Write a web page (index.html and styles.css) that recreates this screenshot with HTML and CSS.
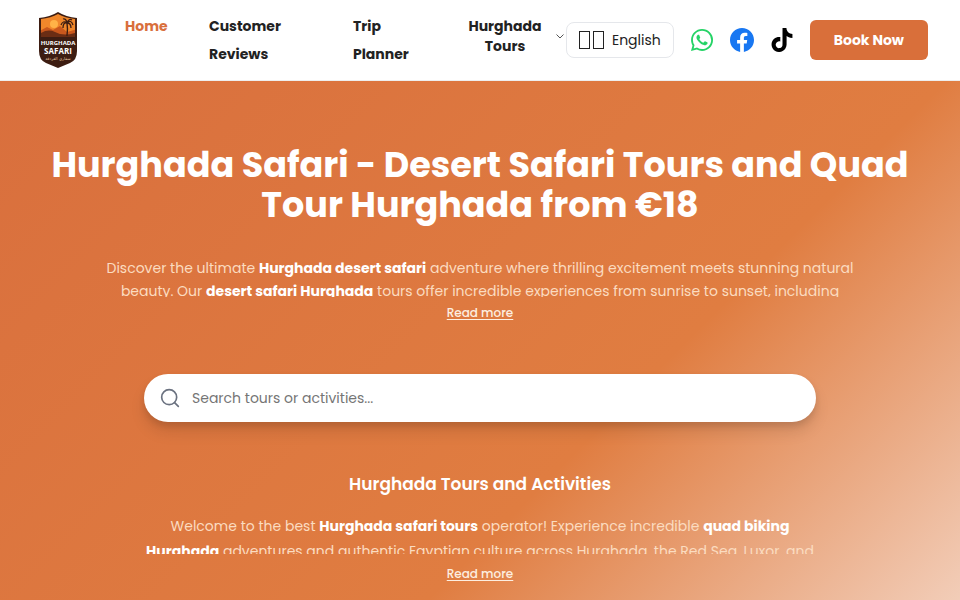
FILE: index.html
```html
<!DOCTYPE html>
<html lang="en">
<head>
<meta charset="utf-8">
<meta name="viewport" content="width=device-width, initial-scale=1">
<title>Hurghada Safari</title>
<link rel="stylesheet" href="styles.css">
</head>
<body>

<header class="header">
  <a class="logo" href="#" aria-label="Hurghada Safari">
    <svg width="40" height="56" viewBox="0 0 40 56">
      <defs>
        <clipPath id="shield"><path d="M20 2 Q27 6 37 7 V39 Q37 46 31 49 L20 54 L9 49 Q3 46 3 39 V7 Q13 6 20 2Z"/></clipPath>
      </defs>
      <path d="M20 0 Q28 5 39 6 V39 Q39 48 32 51 L20 56 L8 51 Q1 48 1 39 V6 Q12 5 20 0Z" fill="#3d1d12"/>
      <g clip-path="url(#shield)">
        <path d="M0 0H40V26H0Z" fill="#f0872b"/>
        <circle cx="16" cy="12" r="4" fill="#ffb347"/>
        <path d="M0 20 L9 15 L15 18 L22 14 L29 20 L40 17 V30H0Z" fill="#c9581d"/>
        <path d="M0 23 Q9 16 17 20 Q26 25 40 20 V30H0Z" fill="#6b2d14"/>
        <path d="M0 25H40V56H0Z" fill="#3d1d12"/>
      </g>
      <path d="M29 24 Q30 17 29 11" fill="none" stroke="#3d1d12" stroke-width="1.4"/>
      <path d="M29 11 Q25 8 23 13 M29 11 Q25 10 25 16 M29 11 Q33 7 35 13 M29 11 Q33 11 33 16 M29 11 Q28 6 25 7 M29 11 Q31 6 34 8" fill="none" stroke="#3d1d12" stroke-width="1.3"/>
      <text class="logo-text" x="20" y="33" font-size="6">HURGHADA</text>
      <text class="logo-text" x="20" y="42" font-size="8">SAFARI</text>
      <text class="logo-arabic" x="20" y="48" font-size="4">سفاري الغردقة</text>
    </svg>
  </a>

  <nav class="nav">
    <a class="nav-link active" href="#">Home</a>
    <a class="nav-link nav-reviews" href="#">Customer Reviews</a>
    <a class="nav-link nav-planner" href="#">Trip Planner</a>
    <button class="nav-drop" type="button">
      <span>Hurghada Tours</span>
      <svg width="8" height="8" viewBox="0 0 8 8" fill="none" stroke="#555" stroke-width="1"><path d="M0.5 2.5L4 6l3.5-3.5"/></svg>
    </button>
  </nav>

  <div class="actions">
    <button class="lang" type="button"><span class="flag"><i></i><i></i></span> <span>English</span></button>
    <a class="social" href="#" aria-label="WhatsApp">
      <svg width="24" height="24" viewBox="-1 -1 26 26" fill="#25d366"><path d="M17.472 14.382c-.297-.149-1.758-.867-2.03-.967-.273-.099-.471-.148-.67.15-.197.297-.767.966-.94 1.164-.173.199-.347.223-.644.075-.297-.15-1.255-.463-2.39-1.475-.883-.788-1.48-1.761-1.653-2.059-.173-.297-.018-.458.13-.606.134-.133.298-.347.446-.52.149-.174.198-.298.298-.497.099-.198.05-.371-.025-.52-.075-.149-.669-1.612-.916-2.207-.242-.579-.487-.5-.669-.51-.173-.008-.371-.01-.57-.01-.198 0-.52.074-.792.372-.272.297-1.04 1.016-1.04 2.479 0 1.462 1.065 2.875 1.213 3.074.149.198 2.096 3.2 5.077 4.487.709.306 1.262.489 1.694.625.712.227 1.36.195 1.871.118.571-.085 1.758-.719 2.006-1.413.248-.694.248-1.289.173-1.413-.074-.124-.272-.198-.57-.347m-5.421 7.403h-.004a9.87 9.87 0 01-5.031-1.378l-.361-.214-3.741.982.998-3.648-.235-.374a9.86 9.86 0 01-1.51-5.26c.001-5.45 4.436-9.884 9.888-9.884 2.64 0 5.122 1.03 6.988 2.898a9.825 9.825 0 012.893 6.994c-.003 5.45-4.437 9.884-9.885 9.884m8.413-18.297A11.815 11.815 0 0012.05 0C5.495 0 .16 5.335.157 11.892c0 2.096.547 4.142 1.588 5.945L.057 24l6.305-1.654a11.882 11.882 0 005.683 1.448h.005c6.554 0 11.89-5.335 11.893-11.893a11.821 11.821 0 00-3.48-8.413z"/></svg>
    </a>
    <a class="social" href="#" aria-label="Facebook">
      <svg width="24" height="24" viewBox="0 0 24 24" fill="#1877f2"><path d="M24 12.073c0-6.627-5.373-12-12-12s-12 5.373-12 12c0 5.99 4.388 10.954 10.125 11.854v-8.385H7.078v-3.47h3.047V9.43c0-3.007 1.792-4.669 4.533-4.669 1.312 0 2.686.235 2.686.235v2.953H15.83c-1.491 0-1.956.925-1.956 1.874v2.25h3.328l-.532 3.47h-2.796v8.385C19.612 23.027 24 18.062 24 12.073z"/></svg>
    </a>
    <a class="social" href="#" aria-label="TikTok">
      <svg width="24" height="24" viewBox="0 0 24 24" fill="#000"><path d="M12.525.02c1.31-.02 2.61-.01 3.91-.02.08 1.53.63 3.09 1.75 4.17 1.12 1.11 2.7 1.62 4.24 1.79v4.03c-1.44-.05-2.89-.35-4.2-.97-.57-.26-1.1-.59-1.62-.93-.01 2.92.01 5.84-.02 8.75-.08 1.4-.54 2.79-1.35 3.94-1.31 1.92-3.58 3.17-5.91 3.21-1.43.08-2.86-.31-4.08-1.03-2.02-1.19-3.44-3.37-3.65-5.71-.02-.5-.03-1-.01-1.49.18-1.9 1.12-3.72 2.58-4.96 1.66-1.44 3.98-2.13 6.15-1.72.02 1.48-.04 2.96-.04 4.44-.99-.32-2.15-.23-3.02.37-.63.41-1.11 1.04-1.36 1.75-.21.51-.15 1.07-.14 1.61.24 1.64 1.82 3.02 3.5 2.87 1.12-.01 2.19-.66 2.77-1.61.19-.33.4-.67.41-1.06.1-1.79.06-3.57.07-5.36.01-4.03-.01-8.05.02-12.07z"/></svg>
    </a>
    <button class="book" type="button">Book Now</button>
  </div>
</header>

<main class="hero">
  <h1>Hurghada Safari - Desert Safari Tours and Quad Tour Hurghada from €18</h1>

  <section class="intro">
    <p class="clamp">Discover the ultimate <strong>Hurghada desert safari</strong> adventure where thrilling excitement meets stunning natural beauty. Our <strong>desert safari Hurghada</strong> tours offer incredible experiences from sunrise to sunset, including</p>
    <button class="more" type="button">Read more</button>
  </section>

  <form class="search">
    <svg width="20" height="20" viewBox="0 0 24 24" fill="none" stroke="#6b7280" stroke-width="2" stroke-linecap="round"><circle cx="11" cy="11" r="9"/><path d="M22 22l-4.5-4.5"/></svg>
    <input type="text" aria-label="Search tours or activities" placeholder="Search tours or activities...">
  </form>

  <section class="about">
    <h2>Hurghada Tours and Activities</h2>
    <p class="clamp">Welcome to the best <strong>Hurghada safari tours</strong> operator! Experience incredible <strong>quad biking Hurghada</strong> adventures and authentic Egyptian culture across Hurghada, the Red Sea, Luxor, and</p>
    <button class="more" type="button">Read more</button>
  </section>
</main>

</body>
</html>
```
FILE: styles.css
```css
* {
  box-sizing: border-box;
}

body {
  margin: 0;
  min-height: 100vh;
  display: flex;
  flex-direction: column;
  font-family: Poppins, Inter, "Liberation Sans", sans-serif;
  color: #222;
}

a {
  color: inherit;
  text-decoration: none;
}

button {
  font: inherit;
  color: inherit;
  border: 0;
  background: none;
  padding: 0;
  cursor: pointer;
}

/* header */
.header {
  display: flex;
  align-items: center;
  min-height: 81px;
  padding: 0 32px 0 38px;
  background: #fff;
  border-bottom: 1px solid #eee;
}

.logo {
  display: flex;
  margin-right: 47px;
}

.logo-text {
  fill: #fff;
  font-family: "Open Sans", sans-serif;
  font-weight: 700;
  text-anchor: middle;
}

.logo-arabic {
  fill: #e9c9a0;
  font-family: "DejaVu Sans", sans-serif;
  text-anchor: middle;
}

.nav {
  flex: 1;
  display: flex;
  align-items: flex-start;
  gap: 40px;
  font-size: 14px;
  font-weight: 700;
  line-height: 28px;
}

.nav-link {
  min-width: 44px;
}

.active {
  color: #d96f3c;
}

.nav-reviews {
  width: 104px;
}

.nav-planner {
  width: 74px;
}

.nav-drop {
  flex: 1;
  display: flex;
  align-items: center;
  justify-content: space-between;
  padding: 4px 2px 4px 0;
  line-height: 20px;
}

.nav-drop span {
  width: 76px;
}

.actions {
  display: flex;
  align-items: center;
  gap: 16px;
}

.lang {
  display: flex;
  align-items: center;
  gap: 8px;
  height: 36px;
  padding: 0 12px;
  border: 1px solid #e5e7eb;
  border-radius: 8px;
  font-size: 14px;
}

.flag {
  display: flex;
  gap: 3px;
}

.flag i {
  width: 11px;
  height: 18px;
  border: 1px solid #222;
}

.social {
  display: flex;
}

.book {
  height: 40px;
  padding: 0 24px;
  border-radius: 6px;
  background: #d96f3a;
  color: #fff;
  font-size: 14px;
  font-weight: 700;
}

/* hero */
.hero {
  flex: 1;
  display: flex;
  flex-direction: column;
  align-items: center;
  padding: 64px 48px 16px;
  background: linear-gradient(135deg, #d96f3d 0%, #e07d41 64%, #f2cdb8 100%);
  color: #fff;
  text-align: center;
}

h1 {
  margin: 0 0 32px;
  font-size: 35px;
  line-height: 40px;
}

.intro,
.about {
  display: flex;
  flex-direction: column;
  align-items: center;
  font-size: 14px;
}

.intro {
  max-width: 768px;
  line-height: 23px;
}

.about {
  max-width: 672px;
  line-height: 25px;
}

.clamp {
  margin: 0;
  max-height: 40px;
  overflow: hidden;
  color: #fbdcc0;
}

.clamp strong {
  color: #fff;
}

.more {
  margin-top: 8px;
  color: #fdeee0;
  font-size: 12px;
  font-weight: 500;
  line-height: 16px;
  text-decoration: underline;
  text-underline-offset: 2px;
}

.about .more {
  margin-top: 12px;
}

.search {
  display: flex;
  align-items: center;
  gap: 10px;
  width: 78%;
  max-width: 672px;
  height: 48px;
  margin: 53px 0 48px;
  padding: 0 16px;
  border-radius: 24px;
  background: #fff;
  box-shadow: 0 10px 15px rgba(0, 0, 0, 0.1), 0 4px 6px rgba(0, 0, 0, 0.1);
}

.search input {
  flex: 1;
  border: 0;
  outline: 0;
  background: none;
  font: inherit;
  font-size: 14px;
}

.search input::placeholder {
  color: #757575;
}

h2 {
  margin: 0 0 16px;
  font-size: 17px;
  font-weight: 600;
  line-height: 28px;
}
```
